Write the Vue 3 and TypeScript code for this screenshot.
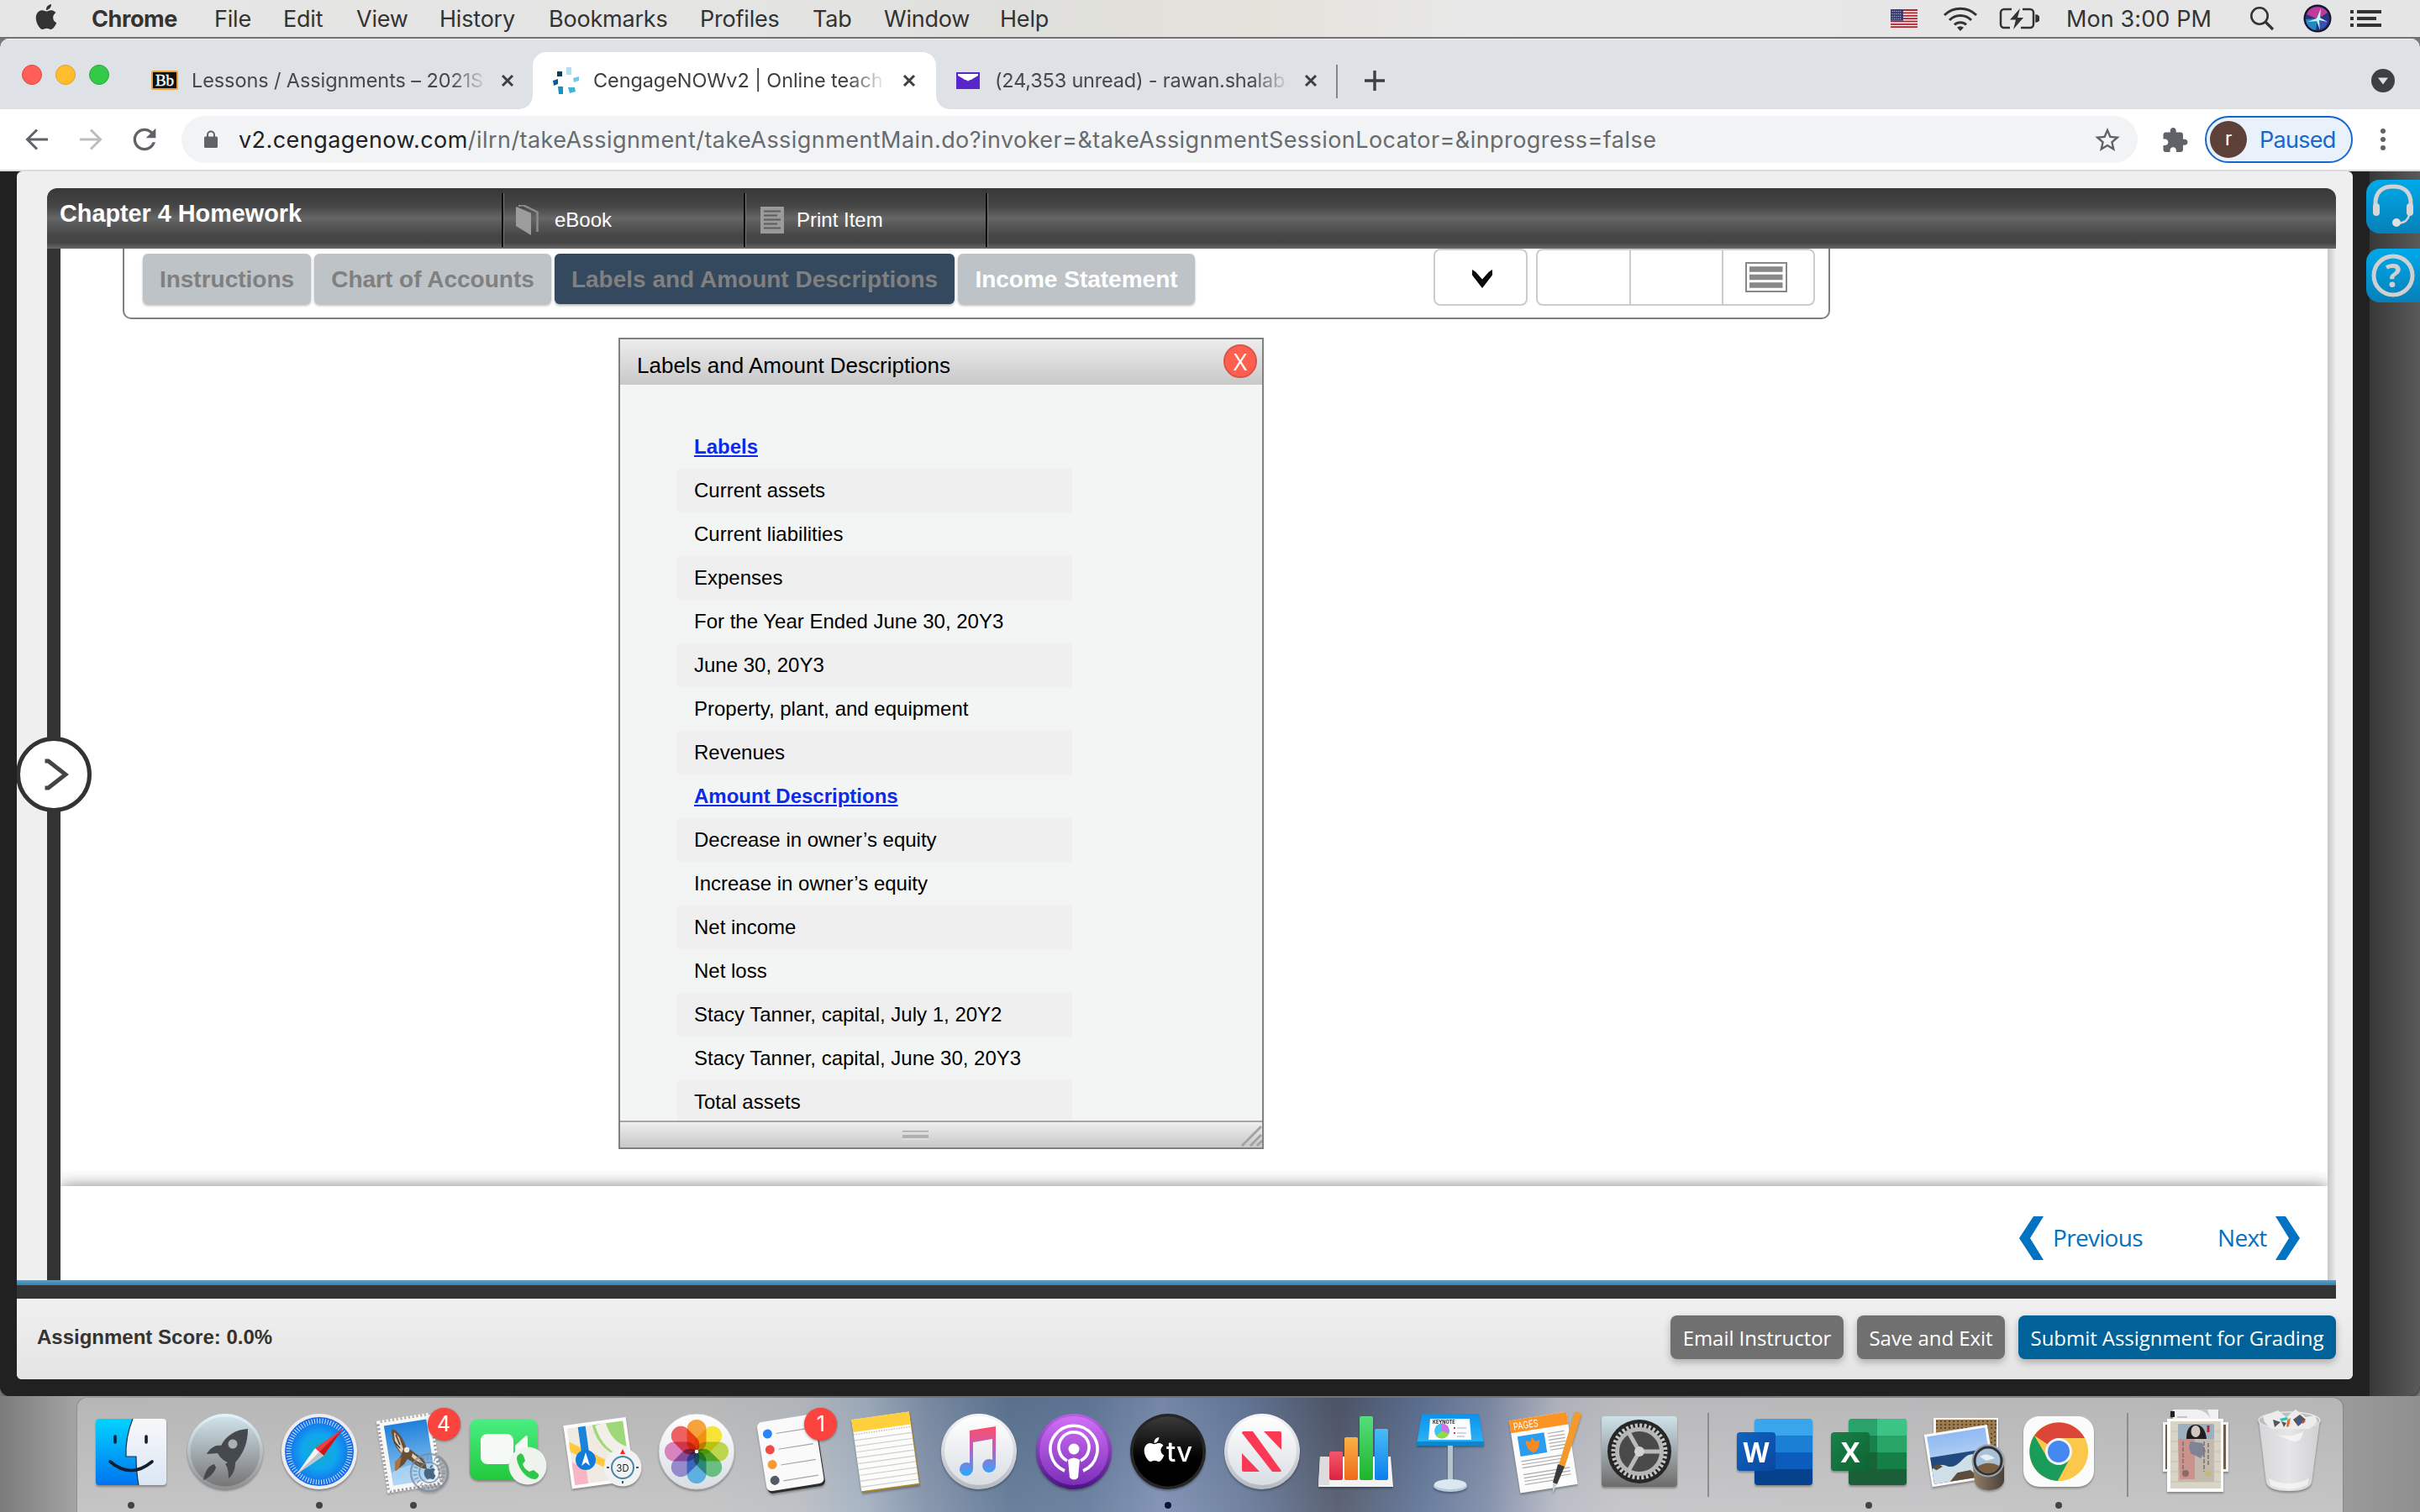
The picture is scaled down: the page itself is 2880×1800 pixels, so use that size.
<script setup lang="ts">
interface MenuEntry { label: string; width: number }
interface Row { text: string; heading?: boolean }

const menus: MenuEntry[] = [
  { label: 'File', width: 82 },
  { label: 'Edit', width: 87 },
  { label: 'View', width: 99 },
  { label: 'History', width: 130 },
  { label: 'Bookmarks', width: 180 },
  { label: 'Profiles', width: 134 },
  { label: 'Tab', width: 85 },
  { label: 'Window', width: 138 },
  { label: 'Help', width: 80 },
]

const rows: Row[] = [
  { text: 'Labels', heading: true },
  { text: 'Current assets' },
  { text: 'Current liabilities' },
  { text: 'Expenses' },
  { text: 'For the Year Ended June 30, 20Y3' },
  { text: 'June 30, 20Y3' },
  { text: 'Property, plant, and equipment' },
  { text: 'Revenues' },
  { text: 'Amount Descriptions', heading: true },
  { text: 'Decrease in owner’s equity' },
  { text: 'Increase in owner’s equity' },
  { text: 'Net income' },
  { text: 'Net loss' },
  { text: 'Stacy Tanner, capital, July 1, 20Y2' },
  { text: 'Stacy Tanner, capital, June 30, 20Y3' },
  { text: 'Total assets' },
]

const petals = ['#f7941e', '#f5e01b', '#b5d334', '#55b873', '#4aa8e0', '#8a7cc8', '#d573b4', '#ee4a4a']
const appleLogo =
  'M12.152 6.896c-.948 0-2.415-1.078-3.96-1.04-2.04.027-3.91 1.183-4.961 3.014-2.117 3.675-.546 9.103 1.519 12.09 1.013 1.454 2.208 3.09 3.792 3.039 1.52-.065 2.09-.987 3.935-.987 1.831 0 2.35.987 3.96.948 1.637-.026 2.676-1.48 3.676-2.948 1.156-1.688 1.636-3.325 1.662-3.415-.039-.013-3.182-1.221-3.22-4.857-.026-3.04 2.48-4.494 2.597-4.559-1.429-2.09-3.623-2.324-4.39-2.376-2-.156-3.675 1.09-4.61 1.09zM15.53 3.83c.843-1.012 1.4-2.427 1.245-3.83-1.207.052-2.662.805-3.532 1.818-.78.896-1.454 2.338-1.273 3.714 1.338.104 2.715-.688 3.559-1.701'
const closeMark = 'M2 2L14 14M14 2L2 14'
</script>

<template>
  <div class="screen">
    <svg class="defs" width="0" height="0">
      <defs>
        <linearGradient id="gFinder" x2="0" y2="1"><stop offset="0" stop-color="#00d4ff" /><stop offset="1" stop-color="#0073f0" /></linearGradient>
        <linearGradient id="gFinderR" x2="0" y2="1"><stop offset="0" stop-color="#f8f8fa" /><stop offset="1" stop-color="#dbe6f5" /></linearGradient>
        <linearGradient id="gLaunch" x2="0" y2="1"><stop offset="0" stop-color="#cfe3ea" /><stop offset=".5" stop-color="#a4acb0" /><stop offset="1" stop-color="#767674" /></linearGradient>
        <linearGradient id="gLaunchRim" x2="0" y2="1"><stop offset="0" stop-color="#e4f4fa" /><stop offset="1" stop-color="#8c9094" /></linearGradient>
        <radialGradient id="gSafari"><stop offset="0" stop-color="#12aebe" /><stop offset=".5" stop-color="#0fa6f0" /><stop offset="1" stop-color="#1565e8" /></radialGradient>
        <linearGradient id="gWhite" x2="0" y2="1"><stop offset="0" stop-color="#ffffff" /><stop offset="1" stop-color="#d9dee3" /></linearGradient>
        <linearGradient id="gWhiteRim" x2="0" y2="1"><stop offset="0" stop-color="#f6f6f8" /><stop offset="1" stop-color="#b4b9c1" /></linearGradient>
        <linearGradient id="gSky" x2="0" y2="1"><stop offset="0" stop-color="#1f80dc" /><stop offset="1" stop-color="#98cbf0" /></linearGradient>
        <linearGradient id="gFace" x2="0" y2="1"><stop offset="0" stop-color="#4bee82" /><stop offset="1" stop-color="#22c93b" /></linearGradient>
        <linearGradient id="gNote" x2="0" y2="1"><stop offset="0" stop-color="#ff4d63" /><stop offset=".45" stop-color="#c25dc0" /><stop offset="1" stop-color="#28aaff" /></linearGradient>
        <linearGradient id="gPod" x2="0" y2="1"><stop offset="0" stop-color="#cf70f5" /><stop offset="1" stop-color="#7b2fb8" /></linearGradient>
        <linearGradient id="gPodRim" x2="0" y2="1"><stop offset="0" stop-color="#bb60e6" /><stop offset="1" stop-color="#4a1482" /></linearGradient>
        <linearGradient id="gTv" x2="0" y2="1"><stop offset="0" stop-color="#3a3a3a" /><stop offset=".6" stop-color="#000" /></linearGradient>
        <linearGradient id="gKey" x2="0" y2="1"><stop offset="0" stop-color="#0a93ef" /><stop offset="1" stop-color="#2db4f4" /></linearGradient>
        <linearGradient id="gPref" x2="0" y2="1"><stop offset="0" stop-color="#cfe2ea" /><stop offset="1" stop-color="#6d6d6b" /></linearGradient>
        <linearGradient id="gRed" x2="0" y2="1"><stop offset="0" stop-color="#f4566b" /><stop offset="1" stop-color="#dd2440" /></linearGradient>
        <linearGradient id="gOrange" x2="0" y2="1"><stop offset="0" stop-color="#fbb244" /><stop offset="1" stop-color="#ef6a1c" /></linearGradient>
        <linearGradient id="gGreen" x2="0" y2="1"><stop offset="0" stop-color="#55de7c" /><stop offset="1" stop-color="#1fb42c" /></linearGradient>
        <linearGradient id="gBlue" x2="0" y2="1"><stop offset="0" stop-color="#49bdf5" /><stop offset="1" stop-color="#0a7ff0" /></linearGradient>
        <linearGradient id="gWord" x2="1" y2="1"><stop offset="0" stop-color="#0f64c0" /><stop offset="1" stop-color="#0a48a0" /></linearGradient>
        <linearGradient id="gExcel" x2="1" y2="1"><stop offset="0" stop-color="#1a8048" /><stop offset="1" stop-color="#0d6434" /></linearGradient>
        <linearGradient id="gTrash" x2="1" y2="0"><stop offset="0" stop-color="#d6d6d8" /><stop offset=".5" stop-color="#e6e6e8" /><stop offset="1" stop-color="#d0d0d2" /></linearGradient>
        <linearGradient id="gLens" x2="1" y2="0"><stop offset="0" stop-color="#96806a" /><stop offset="1" stop-color="#4a4036" /></linearGradient>
        <linearGradient id="gPhotoSky" x2="0" y2="1"><stop offset="0" stop-color="#8fbaf2" /><stop offset="1" stop-color="#cfe2f6" /></linearGradient>
      </defs>
    </svg>

    <header class="menubar">
      <svg class="apple" viewBox="0 0 24 24"><path :d="appleLogo" fill="#333" /></svg>
      <span class="app-name">Chrome</span>
      <span v-for="m in menus" :key="m.label" class="menu" :style="{ width: m.width + 'px' }">{{ m.label }}</span>
      <div class="status">
        <svg class="flag" viewBox="0 0 32 22">
          <rect width="32" height="22" fill="#f4f0f0" />
          <g fill="#b3232f"><rect width="32" height="2" /><rect y="3.5" width="32" height="1.8" /><rect y="6.9" width="32" height="1.8" /><rect y="10.2" width="32" height="1.8" /><rect y="13.6" width="32" height="1.8" /><rect y="17" width="32" height="1.8" /><rect y="20.2" width="32" height="1.8" /></g>
          <rect width="15" height="13.6" fill="#3d3e70" />
          <path d="M1.5 2.5h12M1.5 5.5h12M1.5 8.5h12M1.5 11.3h12" stroke="#c9c9e0" stroke-width="1" stroke-dasharray="1 1.4" />
        </svg>
        <svg class="wifi" viewBox="0 0 42 30" fill="none" stroke="#333" stroke-width="3">
          <path d="M2 11a27 27 0 0 1 38 0M8 17a18 18 0 0 1 26 0M14 22.500a10 10 0 0 1 14 0" />
          <path d="M21 30l-4-4.200a6 6 0 0 1 8 0z" fill="#333" stroke="none" />
        </svg>
        <svg class="battery" viewBox="0 0 48 26" fill="none" stroke="#333" stroke-width="2.500">
          <path d="M15 2H6a4 4 0 0 0-4 4v14a4 4 0 0 0 4 4h7M28 2h9a4 4 0 0 1 4 4v14a4 4 0 0 1-4 4h-11" />
          <path d="M25 1L13 14.500h7L17 26L29 12h-7z" fill="#333" stroke="none" /><path d="M44 9a4 4 0 0 1 0 8z" fill="#333" stroke="#333" stroke-width="1.500" />
        </svg>
        <span class="clock">Mon 3:00 PM</span>
        <svg class="search" viewBox="0 0 30 30" fill="none" stroke="#333" stroke-width="2.600"><circle cx="12" cy="12" r="9.700" /><path d="M19 19l9 9" stroke-width="3.200" /></svg>
        <svg class="siri" viewBox="0 0 34 34">
          <circle cx="17" cy="17" r="16.500" fill="#12122a" /><circle cx="17" cy="17" r="14.500" fill="#28337c" />
          <path d="M4 12a14 14 0 0 1 25-2l-12 8z" fill="#c23a98" /><path d="M3 18a14 14 0 0 0 12 13l2-14z" fill="#1f8ac0" />
          <path d="M17 17l12 4a13 13 0 0 1-8 9z" fill="#3a4fb8" />
          <path d="M5 21l11-4 5-12-1 11 9 5-10-2 1 12-4-11z" fill="#bdf6f4" />
        </svg>
        <svg class="list" viewBox="0 0 38 20" fill="#333"><rect width="4" height="4" /><rect y="8" width="4" height="4" /><rect y="16" width="4" height="4" /><rect x="8" width="29" height="4" /><rect x="8" y="8" width="23" height="4" /><rect x="8" y="16" width="29" height="4" /></svg>
      </div>
    </header>

    <section class="window">
      <div class="tabstrip">
        <div class="lights"><i class="red" /><i class="amber" /><i class="green" /></div>
        <div class="tab tab-first">
          <svg class="fav32" viewBox="0 0 32 32"><rect x="1" y="5" width="30" height="21" rx="1.500" fill="#111" stroke="#e8a33a" stroke-width="2" /><text x="16" y="22" text-anchor="middle" font-family="Liberation Serif, serif" font-size="19" textLength="22" lengthAdjust="spacingAndGlyphs" fill="#fff" stroke="#fff" stroke-width=".4">Bb</text></svg>
          <span class="title w352">Lessons / Assignments – 2021S</span>
          <svg class="close" viewBox="0 0 16 16"><path :d="closeMark" /></svg>
        </div>
        <div class="tab tab-active">
          <svg class="fav32" viewBox="0 0 32 32">
            <rect x="16" y="0" width="6" height="9" fill="#aee0ef" /><rect x="5" y="5" width="6" height="6" fill="#0a3e5c" /><path d="M24 13l7-2v5l-6 2z" fill="#74c8e6" /><path d="M0 16l6-2v6l-5 2z" fill="#0a5f90" /><path d="M18 24h8l1 5-7 2z" fill="#3fb4dc" /><path d="M6 23h6v9h-5z" fill="#1493c8" />
          </svg>
          <span class="title w348">CengageNOWv2 | Online teach</span>
          <svg class="close" viewBox="0 0 16 16"><path :d="closeMark" /></svg>
        </div>
        <div class="tab tab-mail">
          <svg class="fav28" viewBox="0 0 28 20"><rect width="28" height="20" fill="#5826c9" /><path d="M2 2h24v2l-8.500 5h-7L2 4z" fill="#fff" /><path d="M9 8h10l-5 2.500z" fill="#fff" /></svg>
          <span class="title w350">(24,353 unread) - rawan.shalab</span>
          <svg class="close" viewBox="0 0 16 16"><path :d="closeMark" /></svg>
        </div>
        <i class="tab-rule" />
        <svg class="plus" viewBox="0 0 24 24"><path d="M12 0v24M0 12h24" stroke="#3c4043" stroke-width="3.400" /></svg>
        <svg class="tab-menu" viewBox="0 0 28 28"><circle cx="14" cy="14" r="14" fill="#3c4043" /><path d="M8 10.500h12l-6 8z" fill="#dee1e6" /></svg>
      </div>

      <div class="toolbar">
        <svg class="nav" viewBox="0 0 32 32"><path d="M29 16H5M16 4.500L4.500 16L16 27.500" fill="none" stroke="#5f6368" stroke-width="3" /></svg>
        <svg class="nav" viewBox="0 0 32 32"><path d="M3 16h24M16 4.500L27.500 16L16 27.500" fill="none" stroke="#bbbdc0" stroke-width="3" /></svg>
        <svg class="nav reload" viewBox="0 0 24 24"><path d="M17.650 6.350C16.200 4.900 14.210 4 12 4c-4.420 0-7.990 3.580-7.990 8s3.570 8 7.990 8c3.730 0 6.840-2.550 7.730-6h-2.080c-.82 2.330-3.040 4-5.650 4-3.310 0-6-2.690-6-6s2.690-6 6-6c1.660 0 3.140.69 4.220 1.780L13 11h7V4l-2.350 2.350z" fill="#5f6368" /></svg>
        <div class="omnibox">
          <svg class="lock" viewBox="0 0 16 22"><rect y="7.500" width="16" height="13.500" rx="1.500" fill="#5f6368" /><path d="M4 9V5.500a4 4 0 0 1 8 0V9" fill="none" stroke="#5f6368" stroke-width="2" /></svg>
          <span class="url"><b>v2.cengagenow.com</b>/ilrn/takeAssignment/takeAssignmentMain.do?invoker=&amp;takeAssignmentSessionLocator=&amp;inprogress=false</span>
          <svg class="star" viewBox="2 2 20 19"><path d="M22 9.240l-7.190-.62L12 2 9.190 8.630 2 9.240l5.460 4.730L5.820 21 12 17.270 18.180 21l-1.630-7.030L22 9.240zM12 15.400l-3.760 2.270 1-4.280-3.320-2.880 4.380-.38L12 6.100l1.710 4.040 4.380.38-3.320 2.880 1 4.280L12 15.400z" fill="#5f6368" /></svg>
        </div>
        <svg class="puzzle" viewBox="2 1 21 21"><path d="M20.500 11H19V7c0-1.100-.9-2-2-2h-4V3.500C13 2.120 11.880 1 10.500 1S8 2.120 8 3.500V5H4c-1.100 0-1.990.9-1.990 2v3.800H3.500c1.490 0 2.700 1.210 2.700 2.700s-1.210 2.700-2.700 2.700H2V20c0 1.100.9 2 2 2h3.800v-1.500c0-1.490 1.210-2.700 2.700-2.700 1.490 0 2.700 1.210 2.700 2.700V22H17c1.100 0 2-.9 2-2v-4h1.500c1.380 0 2.500-1.120 2.500-2.500S21.880 11 20.500 11z" fill="#5f6368" /></svg>
        <div class="profile"><span class="avatar">r</span><span class="paused">Paused</span></div>
        <div class="kebab"><i /><i /><i /></div>
      </div>

      <div class="page">
        <main class="panel">
          <div class="titlebar">
            <h1>Chapter 4 Homework</h1>
            <div class="tool">
              <svg class="book" viewBox="0 0 27 36"><path d="M0 2L18 9.500V36L0 25z" fill="#9c9c9c" /><path d="M3 1l5-1 17.500 8.500V32" fill="none" stroke="#8c8c8c" stroke-width="2.500" /></svg>
              <span>eBook</span>
            </div>
            <div class="tool">
              <svg class="sheet" viewBox="0 0 28 32"><rect width="28" height="32" fill="#9a9a9a" /><path d="M4 5.500h20M4 10.500h16M4 15.500h20M4 20.500h16M4 25.500h20" stroke="#5c5c5c" stroke-width="2" /></svg>
              <span>Print Item</span>
            </div>
            <div class="tool" />
          </div>

          <div class="body">
            <div class="spine" />
            <div class="sheet-area">
              <div class="work">
                <div class="tabs-box">
                  <button class="chip w200">Instructions</button>
                  <button class="chip w282">Chart of Accounts</button>
                  <button class="chip on w476">Labels and Amount Descriptions</button>
                  <button class="chip lit w282">Income Statement</button>
                  <div class="picker"><svg width="24" height="22" viewBox="0 0 24 22"><path d="M0 0l4 2.500 8 9 8-9L24 0v6.500L12 22L0 6.500z" fill="#0a0a0a" /></svg></div>
                  <div class="segments">
                    <div /><div />
                    <div><svg width="50" height="36" viewBox="0 0 50 36"><rect x="1" y="1" width="48" height="34" fill="#fff" stroke="#888" stroke-width="2" /><path d="M5 8.500h39.500M5 18h39.500M5 27.500h39.500" stroke="#888" stroke-width="6.500" /></svg></div>
                  </div>
                </div>

                <div class="dialog">
                  <div class="dialog-head"><span>Labels and Amount Descriptions</span><button class="dismiss">X</button></div>
                  <ul class="rows">
                    <li v-for="(r, i) in rows" :key="r.text" :class="{ alt: i % 2 === 1 }"><a v-if="r.heading">{{ r.text }}</a><template v-else>{{ r.text }}</template></li>
                  </ul>
                  <div class="dialog-foot">
                    <svg class="grip" viewBox="0 0 31 11"><rect width="31" height="1.500" fill="#aaa" /><rect y="2" width="31" height="2" fill="#ddd" /><rect y="5" width="31" height="4" fill="#b0b0b0" /><rect y="9" width="31" height="2" fill="#ddd" /></svg>
                    <svg class="corner" viewBox="0 0 26 26"><path d="M2 24L25 1M12 24l13-13M20 24l6-6" stroke="#a2a2a2" stroke-width="3" /></svg>
                  </div>
                </div>
              </div>
              <div class="pager">
                <svg width="29" height="52" viewBox="0 0 29 52"><path d="M17 0h12L13 26l16 26H17L0 26z" fill="#0272c2" /></svg>
                <span class="prev">Previous</span>
                <span class="next">Next</span>
                <svg width="29" height="52" viewBox="0 0 29 52"><path d="M12 0H0l16 26L0 52h12l17-26z" fill="#0272c2" /></svg>
              </div>
            </div>
            <div class="edge" />
          </div>
          <div class="blue-rule" />
          <div class="dark-rule" />
          <footer class="footer">
            <strong>Assignment Score: 0.0%</strong>
            <button class="btn w206">Email Instructor</button>
            <button class="btn w176">Save and Exit</button>
            <button class="btn submit">Submit Assignment for Grading</button>
          </footer>
          <div class="drawer"><svg width="30" height="38" viewBox="0 0 30 38"><path d="M1.500 3h4L26 19L5.500 35h-4" fill="none" stroke="#444" stroke-width="5" /></svg></div>
        </main>
        <aside class="rail">
          <div class="help"><svg width="58" height="64" viewBox="0 0 58 64"><path d="M11 32V28C11 14 20 8 32 8s21 6 21 20v4" fill="none" stroke="#d2d2d2" stroke-width="5" /><rect x="8" y="28" width="8" height="15" rx="4" fill="#d8d8d8" /><rect x="48" y="28" width="8" height="15" rx="4" fill="#d8d8d8" /><path d="M51 42c-1 6-6 9-12 10" fill="none" stroke="#d2d2d2" stroke-width="2.500" /><circle cx="36" cy="51" r="5" fill="#e0e0e0" /></svg></div>
          <div class="help"><svg width="62" height="64" viewBox="0 0 62 64"><circle cx="32" cy="32" r="23" fill="none" stroke="#d0d0d0" stroke-width="5" /><text x="32" y="46" text-anchor="middle" font-family="Open Sans, sans-serif" font-size="39" font-weight="700" fill="#d0d0d0">?</text></svg></div>
        </aside>
      </div>
    </section>

    <nav class="desktop">
      <div class="dock">
        <div class="cell run"><svg viewBox="0 0 112 112"><rect x="14" y="17" width="84" height="79" rx="4" fill="url(#gFinder)" /><path d="M58 17q-9 22-8 45h12q0 18 3 34h29a4 4 0 0 0 4-4V21a4 4 0 0 0-4-4z" fill="url(#gFinderR)" /><path d="M58 17q-9 22-8 45h12q0 18 3 34M31 69q25 21 50 0" fill="none" stroke="#17324c" stroke-width="1.200" /><path d="M31 68q25 21 50 0M37 38v7M74 38v7" fill="none" stroke="#12202e" stroke-width="3.600" stroke-linecap="round" /></svg></div>
        <div class="cell"><svg viewBox="0 0 112 112"><circle cx="56" cy="56" r="45" fill="url(#gLaunchRim)" /><circle cx="56" cy="56" r="41.500" fill="url(#gLaunch)" /><path d="M83 29c-15 1-26 8-32 20-8-1-14 4-17 10l13-1c2 4 7 9 12 11l-3 2c3 4 4 8 4 17 5-4 8-10 8-19 9-10 15-22 15-40z" fill="#45494d" /><path d="M43 71c-7 2-11 8-13 19 8-3 13-9 15-15z" fill="#45494d" /><circle cx="65" cy="47" r="5.500" fill="#a9b1b5" /></svg></div>
        <div class="cell run"><svg viewBox="0 0 112 112"><circle cx="56" cy="56" r="45" fill="#ededf0" /><circle cx="56" cy="56" r="41" fill="url(#gSafari)" /><circle cx="56" cy="56" r="36.500" fill="none" stroke="#cfe4fa" stroke-width="6" stroke-dasharray="1 2.185" /><path d="M84 29L61 61L51 52z" fill="#ef3d43" /><path d="M84 29L61 61L56 56.500z" fill="#cc1620" /><path d="M29 83L61 61L51 52z" fill="#f5f5f5" /><path d="M29 83L61 61L56 56.500z" fill="#bfc4c8" /></svg></div>
        <div class="cell run"><svg viewBox="0 0 112 112">
          <g transform="rotate(-9 52 56)"><rect x="21" y="17" width="60" height="81" fill="#f7f7f7" /><rect x="20" y="16" width="62" height="83" fill="none" stroke="#f7f7f7" stroke-width="4" stroke-dasharray="2.600 2.200" /><rect x="26" y="21" width="51" height="72" fill="url(#gSky)" /><path d="M26 78q20-10 51-4v19H26z" fill="#c3e0f6" opacity=".6" /></g>
          <path d="M30 30c3-1 5 0 7 3 6 6 9 13 11 20l5 1c4 3 7 6 11 8 5 3 7 8 8 15-7-1-13-4-18-9l-5-3-4 6-10 8c-1-5 0-11 4-15l3-5c-8-8-12-17-12-29z" fill="#6b4f35" />
          <path d="M33 33l6 6 5 14-2 5c-6-7-9-14-9-25z" fill="#d9cbb9" /><path d="M35 36l5 12M33 44l7 8" stroke="#4a3a2c" stroke-width="1.500" /><path d="M55 58c4 4 8 5 13 12-6-1-11-4-14-8z" fill="#e0d2bd" /><path d="M34 68l8-6-3 14-5 3z" fill="#a97440" /><circle cx="48" cy="54" r="3.200" fill="#efe9df" />
          <g fill="none" stroke="#76879c" opacity=".7"><circle cx="75" cy="81" r="22" stroke-width="2.500" /><circle cx="75" cy="81" r="12" stroke-width="2" /><circle cx="75" cy="81" r="17" stroke-width="5" stroke-dasharray="1.500 3" /></g><svg x="67" y="72" width="17" height="17" viewBox="0 0 24 24"><path :d="appleLogo" fill="#4a6484" /></svg></svg><span class="badge">4</span></div>
        <div class="cell"><svg viewBox="0 0 112 112"><rect x="10" y="17" width="81" height="73" rx="10" fill="url(#gFace)" /><rect x="23" y="35" width="39" height="36" rx="8" fill="#f6faf6" /><path d="M64 49l13-12q2 0 2 3v26H64z" fill="#f6faf6" /><circle cx="79" cy="73" r="22.500" fill="#eef3ee" /><path d="M68 60q3-4 6 1l2 6-3 4q2 6 8 9l5-2 6 5q1 4-4 6c-11 0-20-13-22-24 0-2 0-4 2-5z" fill="#2ec84a" /></svg></div>
        <div class="cell"><svg viewBox="0 0 112 112"><g transform="rotate(-8 50 56)"><rect x="14" y="20" width="75" height="76" fill="#fdfdfd" /><rect x="18" y="24" width="67" height="68" fill="#efebe2" /><path d="M48 24h37v45Q52 60 48 24z" fill="#9fd878" /><path d="M58 24Q62 52 85 62" fill="none" stroke="#f2efe8" stroke-width="13" /><path d="M18 40l67 45v7h-4L18 52z" fill="#ffc83d" /><path d="M18 64l16 12v16H18z" fill="#f8b6c4" /><path d="M31 24h9v46h-9z" fill="#1a82d8" /></g><circle cx="36" cy="66" r="12" fill="#0f7bdb" /><path d="M36 57l5 16-5-4-5 4z" fill="#fff" /><circle cx="80" cy="75" r="22.500" fill="#f0f2f4" /><circle cx="80" cy="75" r="13" fill="none" stroke="#4a86a8" stroke-width="2" /><text x="80" y="79.500" text-anchor="middle" font-family="Inter, sans-serif" font-size="12" textLength="15" lengthAdjust="spacingAndGlyphs" fill="#222">3D</text><path d="M77 59l3-6 3 6z" fill="#f22" /><path d="M61 75h3M96 75h3M80 91v3" stroke="#222" stroke-width="1.600" /></svg></div>
        <div class="cell"><svg viewBox="0 0 112 112"><circle cx="56" cy="56" r="45" fill="url(#gWhite)" stroke="#c4c4c6" stroke-width="1" /><g class="petals"><rect v-for="(c, i) in petals" :key="c" x="44.500" y="18" width="23" height="38" rx="11.500" :fill="c" opacity=".87" :transform="`rotate(${i * 45} 56 56)`" /></g><circle cx="56" cy="56" r="2.200" fill="#fff" /></svg></div>
        <div class="cell"><svg viewBox="0 0 112 112"><g transform="rotate(-9 56 56)"><rect x="22" y="18" width="69" height="84" rx="6" fill="#2c2c2e" /><rect x="21" y="16" width="69" height="83" rx="6" fill="#fafafa" /><path d="M42 32h42M42 51h42M42 70h42M42 89h42" stroke="#a5a5a5" stroke-width="1.200" /><circle cx="32" cy="31" r="5.500" fill="#2a84f5" /><circle cx="32" cy="50" r="5.500" fill="#f04a44" /><circle cx="32" cy="68" r="5.500" fill="#f59b35" /><circle cx="32" cy="87" r="5.500" fill="#555c66" /></g></svg><span class="badge">1</span></div>
        <div class="cell"><svg viewBox="0 0 112 112"><g transform="rotate(-8 56 56)"><rect x="23" y="14" width="69" height="87" fill="#a8842a" /><rect x="22" y="13" width="69" height="86" fill="#fcfcfa" /><rect x="22" y="13" width="69" height="15" fill="#ffd03c" /><path d="M22 31h69" stroke="#aaa" stroke-dasharray="1.500 1.500" /><path d="M22 38h69M22 45h69M22 52h69M22 59h69M22 66h69M22 73h69M22 80h69M22 87h69M22 94h69" stroke="#cfcfcf" stroke-width="1.200" /></g></svg></div>
        <div class="cell"><svg viewBox="0 0 112 112"><circle cx="56" cy="56" r="45" fill="url(#gWhiteRim)" /><circle cx="56" cy="55" r="41" fill="url(#gWhite)" /><path d="M45 31l31-5v46a8 8 0 1 1-4-6V41l-23 4v32a8 8 0 1 1-4-7z" fill="url(#gNote)" /></svg></div>
        <div class="cell"><svg viewBox="0 0 112 112"><circle cx="56" cy="56" r="45" fill="url(#gPodRim)" /><circle cx="56" cy="55" r="41" fill="url(#gPod)" /><g fill="none" stroke="#fff" stroke-width="3.600"><path d="M45 79a28 28 0 1 1 22 0M48 67a18 18 0 1 1 16 0" /></g><circle cx="56" cy="53" r="6.500" fill="#fff" /><path d="M49 66q7-5 14 0l-2 21q-5 5-10 0z" fill="#fff" /></svg></div>
        <div class="cell run dark"><svg viewBox="0 0 112 112"><circle cx="56" cy="56" r="45" fill="#262626" /><circle cx="56" cy="56" r="41.500" fill="url(#gTv)" /><svg x="25" y="39" width="29" height="29" viewBox="0 0 24 24"><path :d="appleLogo" fill="#fff" /></svg><text x="54" y="68" font-family="Inter, sans-serif" font-size="33" font-weight="500" textLength="31" lengthAdjust="spacingAndGlyphs" fill="#fff">tv</text></svg></div>
        <div class="cell"><svg viewBox="0 0 112 112"><circle cx="56" cy="56" r="45" fill="url(#gWhiteRim)" /><circle cx="56" cy="55" r="41" fill="url(#gWhite)" /><path d="M32 34q0-2 2-2h11l34 47q0 1-2 1H68L32 34z" fill="#fb3957" /><path d="M58 32h19q2 0 2 2v20zM32 58v20q0 2 2 2h19z" fill="#fb3957" /></svg></div>
        <div class="cell"><svg viewBox="0 0 112 112"><path d="M13 62h84l3 36H11z" fill="#f3f3f3" /><path d="M13 62h11v34H11z" fill="#dcdcdc" /><rect x="24" y="56" width="16" height="34" rx="2" fill="url(#gRed)" /><rect x="42" y="39" width="16" height="51" rx="2" fill="url(#gOrange)" /><rect x="60" y="14" width="16" height="76" rx="2" fill="url(#gGreen)" /><rect x="78" y="29" width="16" height="61" rx="2" fill="url(#gBlue)" /></svg></div>
        <div class="cell"><svg viewBox="0 0 112 112"><rect x="53" y="48" width="6" height="50" fill="#b8c4cc" /><ellipse cx="56" cy="97" rx="20" ry="7" fill="#b5cadb" /><ellipse cx="56" cy="95" rx="19" ry="6" fill="#dbe8f2" /><path d="M22 11h68l6 36H16z" fill="url(#gKey)" /><path d="M16 44h80v5H16z" fill="#0c86cc" /><path d="M32 17h47l2 25H30z" fill="#fafcff" /><text x="35" y="23" font-family="Inter, sans-serif" font-size="5.500" font-weight="700" fill="#222">KEYNOTE</text><circle cx="46" cy="31.500" r="9" fill="#3ac3f5" /><path d="M46 31.500V22.500a9 9 0 0 1 8 12z" fill="#d670e8" /><path d="M46 31.500l8 3a9 9 0 0 1-15 3z" fill="#8fda45" /><path d="M60 28h2M60 34h2" stroke="#e33" stroke-width="2" /><path d="M64 28h11M64 34h11M64 38h9" stroke="#c8c8d0" stroke-width="1.500" /></svg></div>
        <div class="cell"><svg viewBox="0 0 112 112"><g transform="rotate(-9 52 56)"><rect x="20" y="14" width="69" height="87" fill="#fcfcfc" /><rect x="20" y="14" width="69" height="15" fill="#fb9423" /><text x="24" y="26" font-family="Inter, sans-serif" font-size="12" textLength="30" lengthAdjust="spacingAndGlyphs" fill="#fff">PAGES</text><rect x="27" y="34" width="32" height="24" fill="#2a9df0" /><path d="M43 56q-9-6-7-16l5 3 3-6 3 6 5-1q0 10-9 14z" fill="#f58a20" /><path d="M63 36h20M63 40h20M63 44h20M63 48h20M63 52h20M63 56h20M27 64h56M27 68h56M27 72h50M27 80h56M27 84h56M27 88h56M27 92h40" stroke="#aaa" stroke-width="1.200" /></g><path d="M92 9q6-1 8 3L80 75l-7-3z" fill="#f29a2c" /><path d="M72 71l8 3-9 21-5-2z" fill="#3a3a3c" /><path d="M66 93l5 2-5 10z" fill="#c8d0d8" /></svg></div>
        <div class="cell"><svg viewBox="0 0 112 112"><rect x="11" y="14" width="90" height="84" rx="4" fill="url(#gPref)" /><circle cx="56" cy="56" r="38" fill="#262626" /><circle cx="56" cy="56" r="31" fill="none" stroke="#c4c6c8" stroke-width="5" stroke-dasharray="3 2.410" /><circle cx="56" cy="56" r="26.500" fill="#4a4a4a" stroke="#b4b6b8" stroke-width="5" /><path d="M56 56h26M56 56L43 33M56 56L43 79" stroke="#b8babc" stroke-width="5" /><circle cx="56" cy="56" r="6" fill="#d0d2d4" /></svg></div>
        <i class="dock-rule" />
        <div class="cell"><svg viewBox="0 0 112 112"><rect x="32" y="17" width="69" height="79" rx="4" fill="#39a5ec" /><path d="M32 37h69v20H32z" fill="#1b7fd6" /><path d="M32 57h69v20H32z" fill="#0b5cbc" /><path d="M32 77h69v15a4 4 0 0 1-4 4H36a4 4 0 0 1-4-4z" fill="#05418c" /><rect x="11" y="33" width="46" height="46" rx="4" fill="url(#gWord)" /><text x="34" y="69" text-anchor="middle" font-family="Open Sans, sans-serif" font-size="34" font-weight="700" textLength="31" lengthAdjust="spacingAndGlyphs" fill="#fff">W</text></svg></div>
        <div class="cell run"><svg viewBox="0 0 112 112"><rect x="32" y="17" width="69" height="79" rx="4" fill="#2aa36a" /><path d="M66 17h31a4 4 0 0 1 4 4v16H66z" fill="#3bc485" /><path d="M66 37h35v20H66z" fill="#27a466" /><path d="M32 37h34v20H32z" fill="#14824a" /><path d="M66 57h35v20H66z" fill="#158045" /><path d="M32 57h34v20H32z" fill="#1a6338" /><path d="M32 77h69v15a4 4 0 0 1-4 4H36a4 4 0 0 1-4-4z" fill="#1b5f38" /><rect x="11" y="33" width="46" height="46" rx="4" fill="url(#gExcel)" /><text x="34" y="69" text-anchor="middle" font-family="Open Sans, sans-serif" font-size="34" font-weight="700" fill="#fff">X</text></svg></div>
        <div class="cell"><svg viewBox="0 0 112 112">
          <rect x="21" y="16" width="77" height="74" fill="#f4f4f2" /><rect x="24" y="18" width="72" height="70" fill="#9a7c50" /><path d="M24 20h72M24 24h72M24 28h72M94 32v56M90 34v54" stroke="#5c482c" stroke-width="2" stroke-dasharray="2 3" />
          <g transform="rotate(-9 50 60)"><rect x="14" y="30" width="76" height="63" fill="#fbfbfb" /><rect x="17" y="33" width="70" height="57" fill="url(#gPhotoSky)" /><rect x="17" y="58" width="70" height="32" fill="#234a80" /><path d="M17 72q10-6 18-1t20-5 32 3v21H17z" fill="#cfdfe8" /><path d="M17 70l8-3 5 4-8 3zM36 90l10-9 16-1 8 10z" fill="#5e4c3c" /></g>
          <path d="M67 68h38v23q-2 10-18 11-15-1-17-11z" fill="url(#gLens)" /><circle cx="86" cy="67" r="18.500" fill="#2e3236" stroke="#98a0a8" stroke-width="2" /><circle cx="86" cy="67" r="14.500" fill="#a9c0d6" /><path d="M73 74q13-8 26-1-3 9-13 9-9 0-13-8z" fill="#7a5c3e" /><path d="M76 62q8-6 18 2l-10 3z" fill="#e6eef4" /></svg></div>
        <div class="cell run shift"><svg viewBox="0 0 112 112"><rect x="14" y="14" width="84" height="84" rx="19" fill="#fbfbfb" /><circle cx="56" cy="56" r="35" fill="#fcc84b" /><path d="M56 56L27 37A35 35 0 0 1 87 40H56z" fill="#db4638" /><path d="M56 56l13 9-14 26A35 35 0 0 1 27 37l14 24z" fill="#1a9c5b" /><path d="M56 40h31a35 35 0 0 1-32 51l14-26z" fill="#fcc84b" /><circle cx="56" cy="56" r="16" fill="#f4f4f4" /><circle cx="56" cy="56" r="13" fill="#4688f1" /></svg></div>
        <i class="dock-rule second" />
        <div class="cell"><svg viewBox="0 0 112 112">
          <rect x="29" y="6" width="54" height="30" fill="#f0f0f0" /><path d="M26 8h5v7h-5z" fill="#222" /><path d="M34 15h12" stroke="#999" /><path d="M58 6q12 2 16 12l-4-12z" fill="#c8c8c8" />
          <rect x="17" y="21" width="78" height="59" fill="#f2f2f0" /><path d="M20 24h72v53H20z" fill="#6c5f52" /><rect x="22" y="17" width="67" height="87" fill="#fcfcfc" /><rect x="26" y="20" width="60" height="80" fill="#d8d4c6" /><path d="M26 32h60M26 44h60M26 56h60M26 68h60M26 80h60M26 92h60" stroke="#c6c1b2" />
          <rect x="35" y="23" width="43" height="69" rx="2" fill="#c3b9ae" /><path d="M35 41h20v48H37z" fill="#cf8680" opacity=".75" /><rect x="35" y="23" width="43" height="18" rx="2" fill="#9eb0be" /><path d="M45 41q0-17 11-17t13 17z" fill="#1f1d1e" /><ellipse cx="56" cy="32" rx="5.500" ry="7" fill="#d0c8c0" /><path d="M50 44l14 2 4 10-6 8-12-6-2-8z" fill="#7e8496" /><path d="M41 44v36M66 44v36M71 46v28" stroke="#75706e" stroke-width="1.500" stroke-dasharray="5 2" /><path d="M71 25v8" stroke="#b02a35" stroke-width="3" /><circle cx="44" cy="82" r="4" fill="#8a6a6a" /><circle cx="71" cy="82" r="3.500" fill="#c9b878" /></svg></div>
        <div class="cell"><svg viewBox="0 0 112 112"><path d="M19 18l9 75q3 10 27 10t27-10l10-75z" fill="url(#gTrash)" /><ellipse cx="55.500" cy="19" rx="36.500" ry="10" fill="#bdbdbf" stroke="#e6e6e8" stroke-width="1.500" /><path d="M24 14l18-7 10 8 11-9 12 9 11-2 3 8-10 8H34l-8-8z" fill="#ececec" /><path d="M36 18l9 3-7 6zM60 18l8-6 7 6-9 8zM46 20l6 2-3 5z" fill="#55555a" /><path d="M44 17l9-2 1 3-8 2z" fill="#2ac5b8" /><path d="M53 19l4-3-2 10-3 1z" fill="#e06a38" /><path d="M63 17l8 2-3 5z" fill="#3c58a8" /><path d="M70 18l5 2-4 3z" fill="#c4472c" /><path d="M36 34q18 8 36-2-2 14-12 12z" fill="#fff" opacity=".6" /><path d="M31 88q24 12 48 0l-2 8q-22 9-44 0z" fill="#fff" opacity=".55" /></svg></div>
      </div>
    </nav>
  </div>
</template>

<style>
html, body { margin: 0; width: 2880px; height: 1800px; overflow: hidden; }
</style>

<style scoped>
* { box-sizing: border-box; }
.screen { width: 2880px; height: 1800px; display: flex; flex-direction: column; overflow: hidden; background: #777; font-family: "Liberation Sans", Arial, sans-serif; }
.defs { position: absolute; }
svg { display: block; flex: none; }
button { border: 0; padding: 0; font: inherit; }
span { white-space: pre; }

.menubar { height: 46px; flex: none; display: flex; align-items: center; padding: 0 45px 0 40px; border-bottom: 2px solid #717171; background: linear-gradient(90deg, #e6e6e6 0, #e4e4e3 900px, #dfdfdc 1200px, #e4e2db 1500px, #e8e8e8 1750px, #e5e5e5 100%); font: 27px/44px Inter, sans-serif; letter-spacing: -0.2px; color: #333; }
.menubar span { height: 44px; padding-top: 1px; }
.apple { width: 30px; height: 30px; margin: 0 39px 4px 0; }
.app-name { width: 146px; font-weight: 700; letter-spacing: -0.4px; }
.status { margin-left: auto; display: flex; align-items: center; }
.flag { width: 32px; height: 22px; }
.wifi { width: 42px; height: 30px; margin-left: 30px; }
.battery { width: 48px; height: 26px; margin-left: 25px; }
.clock { width: 173px; margin-left: 32px; letter-spacing: 0.1px; }
.search { width: 30px; height: 30px; margin-left: 45px; }
.siri { width: 34px; height: 34px; margin-left: 34px; }
.list { width: 38px; height: 20px; margin-left: 22px; }

.window { height: 1616px; flex: none; display: flex; flex-direction: column; border-radius: 10px 10px 12px 12px; overflow: hidden; background: #212121; box-shadow: 0 2px 2px #555; }
.tabstrip { height: 84px; flex: none; display: flex; align-items: flex-end; background: #dee1e6; border-top: 1px solid #f4f4f6; }
.lights { width: 180px; height: 68px; display: flex; gap: 16px; padding: 15px 0 0 26px; }
.lights i { width: 24px; height: 24px; border-radius: 50%; }
.red { background: #ff5f57; border: 1px solid #e2463f; }
.amber { background: #ffbd2e; border: 1px solid #e0a02b; }
.green { background: #35c94a; border: 1px solid #24a838; }
.tab { height: 68px; display: flex; align-items: center; font: 23.500px/34px Inter, sans-serif; letter-spacing: -0.1px; color: #45494d; }
.tab-first { width: 454px; }
.tab-active { width: 480px; padding-left: 24px; background: #fff; border-radius: 16px 16px 0 0; position: relative; color: #3c4043; }
.tab-active::before, .tab-active::after { content: ""; position: absolute; bottom: 0; width: 16px; height: 16px; }
.tab-active::before { left: -16px; background: radial-gradient(circle at 0 0, transparent 15.500px, #fff 16px); }
.tab-active::after { right: -16px; background: radial-gradient(circle at 100% 0, transparent 15.500px, #fff 16px); }
.tab-mail { width: 476px; padding-left: 24px; }
.fav32 { width: 32px; height: 32px; margin-right: 16px; }
.fav28 { width: 28px; height: 20px; margin-right: 18px; }
.title { overflow: hidden; -webkit-mask-image: linear-gradient(90deg, #000 calc(100% - 46px), transparent); mask-image: linear-gradient(90deg, #000 calc(100% - 46px), transparent); }
.w352 { width: 353px; }
.w348 { width: 349px; margin-right: 4px; }
.w350 { width: 352px; margin-right: 1px; letter-spacing: -0.2px; }
.close { width: 16px; height: 16px; margin-left: 15px; stroke: #3c4043; stroke-width: 3; fill: none; }
.tab-rule { width: 2px; height: 40px; margin-bottom: 13px; background: #85898e; }
.plus { width: 24px; height: 24px; margin: 0 0 22px 32px; }
.tab-menu { width: 28px; height: 28px; margin: 0 30px 20px auto; }

.toolbar { height: 74px; flex: none; display: flex; align-items: center; padding-left: 28px; background: #fff; border-bottom: 2px solid #d9dce0; }
.nav { width: 32px; height: 32px; margin-right: 32px; }
.reload { width: 40px; height: 40px; margin: 0 23px 0 -4px; }
.omnibox { width: 2328px; height: 56px; display: flex; align-items: center; padding: 0 21px 0 27px; margin-left: 1px; border-radius: 28px; background: #f1f3f4; }
.lock { width: 16px; height: 22px; margin-right: 25px; }
.url { flex: 1; padding-top: 1px; font: 27px/40px Inter, sans-serif; letter-spacing: 0.440px; color: #676b70; }
.url b { font-weight: 400; color: #202124; }
.star { width: 30px; height: 28px; }
.puzzle { width: 30px; height: 29px; margin-left: 30px; }
.profile { width: 176px; height: 56px; margin-left: 20px; display: flex; align-items: center; padding-left: 4px; border: 2px solid #1967c9; border-radius: 28px; background: #e9f1fb; }
.avatar { width: 44px; height: 44px; border-radius: 50%; background: #5d4037; color: #fff; font: 24px/42px Roboto, sans-serif; text-align: center; }
.paused { margin-left: 15px; padding-top: 1px; font: 27px/40px Inter, sans-serif; letter-spacing: -0.700px; color: #1967c9; }
.kebab { margin-left: 33px; display: flex; flex-direction: column; gap: 4px; }
.kebab i { width: 6px; height: 6px; border-radius: 50%; background: #5f6368; }

.page { flex: 1; display: flex; padding: 0 0 20px 20px; background: #212121; position: relative; }
.panel { width: 2780px; height: 1438px; flex: none; display: flex; flex-direction: column; padding-top: 20px; border-radius: 6px; background: #efefef; position: relative; overflow: hidden; }
.titlebar { width: 2724px; height: 72px; flex: none; margin-left: 36px; display: flex; border-radius: 12px 12px 0 0; background: linear-gradient(#383838 0, #464646 30%, #666 50%, #585858 60%, #454545 80%, #444 90%, #6a6a6a 100%); color: #fff; }
.titlebar h1 { margin: 0; width: 541px; padding-left: 15px; font-size: 28.800px; line-height: 60px; font-weight: 700; }
.tool { width: 288px; height: 64px; margin-top: 6px; padding: 0 0 0 15px; display: flex; align-items: center; border-left: 2px solid #000; box-shadow: inset 1px 0 #777; font-size: 24px; }
.book { width: 27px; height: 36px; margin-right: 19px; }
.sheet { width: 28px; height: 32px; margin: 0 15px 0 3px; }
.body { height: 1228px; flex: none; display: flex; width: 2724px; margin-left: 36px; }
.spine { width: 16px; background: #333; }
.sheet-area { width: 2698px; display: flex; flex-direction: column; background: #fff; }
.edge { width: 10px; background: linear-gradient(90deg, #c6c6c6, #ededed); }
.work { height: 1116px; }
.tabs-box { width: 2032px; height: 84px; margin-left: 74px; padding: 6px 0 0 22px; display: flex; border: 2px solid #808080; border-top: 0; border-radius: 0 0 10px 10px; }
.chip { height: 60px; margin-right: 4px; padding-top: 1px; border-radius: 6px; background: #bdc3c7; color: #808080; font-size: 28px; font-weight: 700; box-shadow: 0 2px 3px #bbb; white-space: nowrap; }
.chip.on { background: #34495e; }
.chip.lit { color: #fff; }
.w200 { width: 200px; }
.w282 { width: 282px; }
.w476 { width: 476px; }
.picker, .segments { height: 68px; margin-top: -6px; border: 2px solid #ccc; border-radius: 8px; display: flex; }
.picker { width: 112px; margin-left: 280px; align-items: center; justify-content: center; padding: 4px 0 0 4px; }
.segments { width: 332px; margin-left: 10px; }
.segments div { width: 109.500px; display: flex; align-items: center; justify-content: center; padding-right: 4px; }
.segments div + div { border-left: 2px solid #ccc; }

.dialog { width: 768px; height: 966px; margin: 22px 0 0 664px; display: flex; flex-direction: column; border: 2px solid #808080; background: #f3f5f4; }
.dialog-head { height: 54px; flex: none; display: flex; justify-content: space-between; padding: 0 6px 0 20px; background: linear-gradient(#ededed, #c8c8c8); font-size: 26px; line-height: 62px; color: #000; }
.dismiss { width: 40px; height: 40px; margin-top: 6px; border: 2px solid #d9534a; border-radius: 50%; background: #ff5f4f; color: #fff; font: 28px/34px "Open Sans", sans-serif; }
.rows { list-style: none; flex: 1; margin: 0; padding: 48px 0 0 68px; overflow: hidden; }
.rows li { width: 470px; height: 52px; padding-left: 20px; font-size: 24px; line-height: 52px; white-space: nowrap; color: #000; }
.rows li.alt { background: #efefef; }
.rows a { color: #0a2be8; font-weight: 700; text-decoration: underline; text-decoration-thickness: 2px; text-underline-offset: 2px; }
.dialog-foot { height: 32px; flex: none; display: flex; border-top: 2px solid #a6a6a6; background: linear-gradient(#eee, #c8c8c8); }
.grip { width: 31px; height: 11px; margin: 10px 0 0 336px; }
.corner { width: 26px; height: 26px; margin: 4px 0 0 auto; }

.pager { height: 112px; display: flex; align-items: center; padding: 12px 33px 0 2331px; background: #fff; box-shadow: 0 0 18px rgba(0, 0, 0, .5); clip-path: inset(-18px 0 0 0); color: #0272c2; font: 28px/40px "Open Sans", sans-serif; letter-spacing: -0.700px; }
.prev, .next { padding-bottom: 2px; }
.prev { width: 196px; margin-left: 11px; }
.next { width: 69px; }
.blue-rule { height: 6px; width: 2760px; flex: none; background: linear-gradient(#679cbd, #2b83b4); }
.dark-rule { height: 16px; width: 2760px; flex: none; background: #333; }
.footer { flex: 1; display: flex; align-items: center; padding: 0 20px 4px 24px; background: linear-gradient(#f0f0f0, #e4e4e4); font-size: 24px; color: #333; }
.footer strong { margin-right: auto; }
.btn { height: 52px; margin-left: 16px; padding-top: 1px; border-radius: 8px; background: #707070; color: #fff; font: 24px/51px "Open Sans", sans-serif; box-shadow: 0 4px 8px rgba(0, 0, 0, .25); letter-spacing: -0.05px; }
.btn.submit { width: 378px; background: #006298; }
.w206 { width: 206px; }
.w176 { width: 176px; }
.drawer { position: absolute; left: -1px; top: 673px; width: 90px; height: 90px; padding-left: 5px; display: flex; align-items: center; justify-content: center; border: 5px solid #333; border-radius: 50%; background: #fff; }

.rail { width: 60px; height: 1458px; margin-left: 20px; display: flex; flex-direction: column; gap: 18px; padding-top: 10px; background: linear-gradient(90deg, #383838, #5a5a5a); }
.help { width: 64px; height: 64px; flex: none; margin-left: -4px; border-radius: 16px 0 0 16px; background: linear-gradient(#00a9ea, #0680b8); }

.desktop { height: 138px; flex: none; display: flex; justify-content: center; padding-top: 2px; background: linear-gradient(90deg, #7b7b7b, #a8a8a8 100px, #777 1000px, #777 1900px, #9a9a9a 2790px, #8f8f8f); }
.dock { width: 2696px; height: 136px; padding: 8px 0 0 8px; display: flex; border-radius: 12px 12px 0 0; background: linear-gradient(rgba(0, 0, 0, .05), rgba(255, 255, 255, .08)), linear-gradient(90deg, #c0c0c0 0, #c1c1c1 750px, #b9bdc2 860px, #a0afbf 940px, #8090a8 1010px, #5d7694 1110px, #62799a 1200px, #7b8db0 1290px, #66799a 1390px, #4f5769 1500px, #5e7396 1600px, #7f8ca8 1680px, #b6b9c4 1760px, #c3c3c5 1840px, #c0c0c0 100%); box-shadow: 0 0 2px #666; }
.cell { width: 112.170px; height: 128px; flex: none; position: relative; }
.cell > svg { width: 112px; height: 112px; overflow: visible; filter: drop-shadow(0 2px 1px rgba(0, 0, 0, .3)); }
.cell.run::after { content: ""; position: absolute; left: 52px; top: 116px; width: 8px; height: 8px; border-radius: 50%; background: #444; }
.cell.dark::after { background: #0a1438; }
.cell.shift { margin-left: 1.500px; }
.petals { isolation: isolate; }
.petals rect { mix-blend-mode: multiply; }
.badge { position: absolute; right: 1px; top: 4px; width: 39px; height: 39px; border-radius: 50%; background: #fb443d; color: #fff; font: 25px/39px Inter, sans-serif; text-align: center; box-shadow: 0 1px 3px rgba(0, 0, 0, .4); }
.dock-rule { width: 2px; height: 100px; margin: 10px 22px 0 25px; background: #8d8d8d; flex: none; }
.dock-rule.second { margin-right: 24px; }
</style>
